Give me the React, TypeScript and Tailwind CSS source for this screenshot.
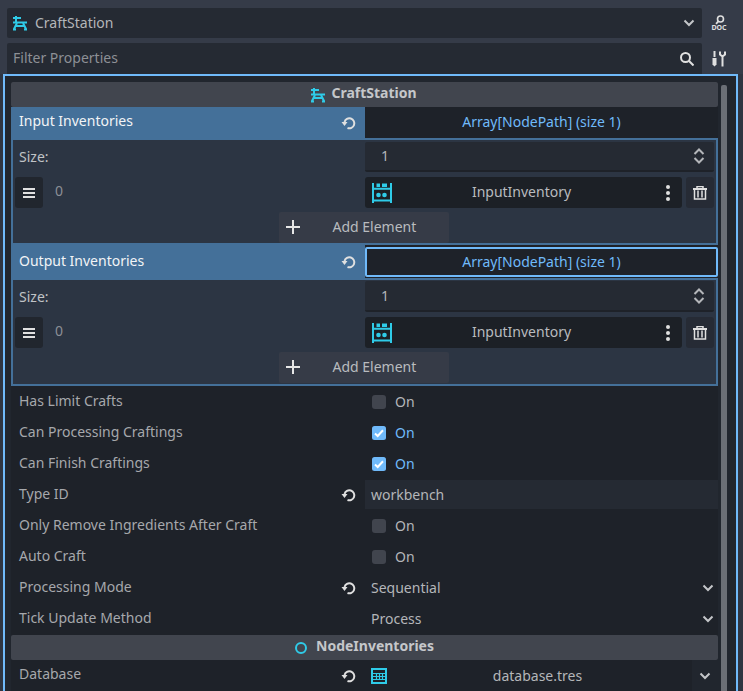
import React from "react";

const Craft = ({ className = "" }: { className?: string }) => (
  <svg width="16" height="16" viewBox="0 0 16 16" className={className} fill="none" stroke="#2fcbe8" strokeWidth="2">
    <path d="M1 3h8M4 1v6M1 7.500h14" />
    <path d="M5 8l-3 6M11 8l3 6M1 14.500h3M12 14.500h3M4 11h8" />
  </svg>
);

const Reset = ({ className = "" }: { className?: string }) => (
  <svg width="16" height="16" viewBox="0 0 16 16" className={className} fill="none">
    <path d="M4.500 7A5 5 0 1 1 7.500 13" stroke="#e0e0e0" strokeWidth="2" />
    <path d="M1.500 7h6L4.500 11z" fill="#e0e0e0" />
  </svg>
);

const Chevron = ({ className = "" }: { className?: string }) => (
  <svg width="12" height="8" viewBox="0 0 12 8" className={className} fill="none" stroke="#c4c6c9" strokeWidth="2">
    <path d="M1.500 1.500L6 6l4.500-4.500" />
  </svg>
);

const Updown = () => (
  <svg width="12" height="16" viewBox="0 0 12 16" fill="none" stroke="#b4b6ba" strokeWidth="2">
    <path d="M1.500 6L6 1.500 10.500 6M1.500 10L6 14.500 10.500 10" />
  </svg>
);

const Inventory = () => (
  <svg width="20" height="20" viewBox="0 0 20 20" fill="none">
    <path d="M1 0v20M19 0v20M1 5.700h18M1 17.500h18" stroke="#2fcbe8" strokeWidth="2" />
    <rect x="4.500" y="0.500" width="3.500" height="3.500" fill="#2fcbe8" />
    <rect x="10" y="0.500" width="5" height="3.500" fill="#2fcbe8" />
    <circle cx="6.500" cy="12" r="2.300" fill="#2fcbe8" />
    <circle cx="12.500" cy="12" r="2.300" fill="#2fcbe8" />
  </svg>
);

const Grabber = () => (
  <svg width="12" height="10" viewBox="0 0 12 10" fill="#e0e0e0">
    <rect width="12" height="2" />
    <rect y="4" width="12" height="2" />
    <rect y="8" width="12" height="2" />
  </svg>
);

const Dots = () => (
  <svg width="4" height="16" viewBox="0 0 4 16" fill="#e0e0e0">
    <circle cx="2" cy="2" r="2" />
    <circle cx="2" cy="8" r="2" />
    <circle cx="2" cy="14" r="2" />
  </svg>
);

const Trash = () => (
  <svg width="14" height="14" viewBox="0 0 14 14" fill="none">
    <path d="M0 3h14" stroke="#e0e0e0" strokeWidth="2" />
    <path d="M4 2V0.500h6V2" stroke="#e0e0e0" strokeWidth="1.500" />
    <path d="M1.500 4v9h11V4" stroke="#e0e0e0" strokeWidth="1.500" />
    <path d="M5 4.500v7M9 4.500v7" stroke="#e0e0e0" strokeWidth="1.500" />
  </svg>
);

const Doc = () => (
  <div className="flex w-[16px] flex-col items-center">
    <svg width="16" height="10" viewBox="0 0 16 10" fill="none">
      <circle cx="9.500" cy="4" r="3" stroke="#e0e0e0" strokeWidth="1.600" />
      <path d="M7.500 6.200L5 8.800" stroke="#e0e0e0" strokeWidth="1.800" />
    </svg>
    <span className="text-[7px] font-bold leading-[6px] text-[#e0e0e0]">DOC</span>
  </div>
);

const Tools = () => (
  <svg width="14" height="16" viewBox="0 0 14 16" fill="none">
    <path d="M2.500 0v6" stroke="#e0e0e0" strokeWidth="2" />
    <path d="M0.500 7h4v6.500l-2 2-2-2z" fill="#e0e0e0" />
    <path d="M8 0.500v3l2.500 2 2.500-2v-3M10.500 5v10.500" stroke="#e0e0e0" strokeWidth="2" />
  </svg>
);

const Search = () => (
  <svg width="14" height="14" viewBox="0 0 14 14" fill="none" stroke="#e0e0e0" strokeWidth="2">
    <circle cx="5.500" cy="5.500" r="4.500" />
    <path d="M8.800 8.800L13.500 13.500" />
  </svg>
);

const Database = () => (
  <svg width="16" height="16" viewBox="0 0 16 16" fill="none" stroke="#2fcbe8">
    <rect x="1" y="1" width="14" height="14" strokeWidth="2" />
    <path d="M1 5.500h14M1 8.500h14M1 11.500h14M5.500 5v7M8.500 5v7M11.500 5v7" strokeWidth="1.200" />
  </svg>
);

const Check = () => (
  <svg width="14" height="14" viewBox="0 0 14 14" className="block">
    <rect width="14" height="14" rx="2.500" fill="#70bafa" />
    <path d="M3 7.500l2.700 2.500L11 4.300" fill="none" stroke="#ffffff" strokeWidth="2" />
  </svg>
);

const PropRow = ({
  label,
  reset,
  last,
  children,
}: {
  label: string;
  reset?: boolean;
  last?: boolean;
  children: React.ReactNode;
}) => (
  <div className={`flex h-[31px] ${last ? "mb-[1px]" : ""}`}>
    <div className="flex w-[354px] shrink-0 items-center justify-between pb-[2px] pl-[8px] pr-[9px] text-[#a6a8ac]">
      <span>{label}</span>
      {reset && <Reset className="mt-[3px]" />}
    </div>
    <div className="flex min-w-0 flex-1 items-center">{children}</div>
  </div>
);

const Toggle = ({ on }: { on?: boolean }) => (
  <div className={`flex items-center pl-[7px] ${on ? "text-[#70bafa]" : "text-[#b4b6b9]"}`}>
    {on ? <Check /> : <div className="h-[14px] w-[14px] rounded-[3px] bg-[#41454e]" />}
    <span className="ml-[9px]">On</span>
  </div>
);

const Dropdown = ({ value }: { value: string }) => (
  <div className="flex w-full items-center justify-between pl-[6px] pr-[4px] text-[#b4b6b9]">
    <span>{value}</span>
    <Chevron />
  </div>
);

const ArraySection = ({ label, focused }: { label: string; focused?: boolean }) => (
  <div>
    <div className={`flex ${focused ? "h-[33px]" : "h-[31px]"}`}>
      <div
        className={`flex w-[354px] shrink-0 items-center justify-between bg-[#447099] pl-[8px] pr-[9px] text-[#f2f4f6] ${
          focused ? "pb-[3px]" : "pb-[5px]"
        }`}
      >
        <span>{label}</span>
        <Reset className={focused ? "mt-[3px]" : "mt-[5px]"} />
      </div>
      <div
        className={`flex flex-1 items-center justify-center rounded-[2px] bg-[#1e2229] text-[#70bafa] ${
          focused ? "mb-[1px] mt-[2px] border-2 border-[#70bafa] pb-[2px]" : "pb-[3px]"
        }`}
      >
        Array[NodePath] (size 1)
      </div>
    </div>
    <div className={`border-2 border-[#447099] bg-[#2c3543] px-[2px] ${focused ? "h-[108px] pt-[1px]" : "h-[107px] pt-[2px]"}`}>
      <div className={`flex ${focused ? "h-[31px]" : "h-[30px]"}`}>
        <div className={`flex w-[350px] shrink-0 items-center pl-[4px] text-[#c0c3c7] ${focused ? "pb-[1px]" : "pb-[2px]"}`}>
          Size:
        </div>
        <div className="flex flex-1 items-center justify-between rounded-[2px] border-b-2 border-[#1e2229] bg-[#252a33] pl-[16px] pr-[9px] text-[#b4b6b9]">
          <span className={focused ? "pb-[1px]" : "pb-[2px]"}>1</span>
          <Updown />
        </div>
      </div>
      <div className="mt-[5px] flex h-[31px]">
        <div className="flex h-[31px] w-[28px] shrink-0 items-center justify-center rounded-[3px] bg-[#21262e]">
          <Grabber />
        </div>
        <span className="ml-[12px] flex h-full w-[310px] shrink-0 items-center pb-[5px] text-[#8b8f96]">0</span>
        <div className="flex w-[317px] shrink-0 items-center rounded-[3px] bg-[#1c2026] pl-[7px] pr-[12px] text-[#b9bbbf]">
          <Inventory />
          <span className="flex h-full flex-1 items-center justify-center pb-[3px] pr-[15px]">InputInventory</span>
          <Dots />
        </div>
        <div className="ml-[4px] flex w-[28px] shrink-0 items-center justify-center rounded-[3px] bg-[#262b35]">
          <Trash />
        </div>
      </div>
      <div className="mt-[4px] flex justify-center pr-[2px]">
        <div className="flex h-[31px] w-[170px] items-center rounded-[2px] bg-[#363b47] pl-[7px] text-[#b9bbbf]">
          <svg width="14" height="14" viewBox="0 0 14 14" fill="#e6e6e6" className="mb-[1px]">
            <rect x="6" width="2" height="14" />
            <rect y="6" width="14" height="2" />
          </svg>
          <span className="ml-[33px] pb-[3px]">Add Element</span>
        </div>
      </div>
    </div>
  </div>
);

const Header = ({ icon, label, gap }: { icon: React.ReactNode; label: string; gap: string }) => (
  <div className={`flex h-[25px] items-center justify-center rounded-[2px] bg-[#41454e] pb-[5px] font-bold text-[#c5c7ca] ${gap}`}>
    {icon}
    <span>{label}</span>
  </div>
);

export default function App() {
  return (
    <div
      className="h-[691px] w-[743px] overflow-hidden bg-[#2f3541] text-[14px] leading-[19px]"
      style={{ fontFamily: '"Noto Sans", sans-serif' }}
    >
      <div className="h-[74px] bg-[#353b48] pl-[7px] pt-[8px]">
        <div className="flex h-[30px]">
          <div className="flex w-[695px] items-center rounded-[2px] bg-[#252a33] pl-[5px] pr-[7px] text-[#b4b6b9]">
            <Craft />
            <span className="ml-[7px] flex-1 pb-[1px]">CraftStation</span>
            <Chevron />
          </div>
          <div className="flex w-[34px] items-center justify-center">
            <Doc />
          </div>
        </div>
        <div className="mt-[5px] flex h-[31px]">
          <div className="flex w-[695px] items-center justify-between rounded-t-[2px] bg-[#252a33] pl-[6px] pr-[8px] text-[#8d9096]">
            <span className="pb-[3px]">Filter Properties</span>
            <Search />
          </div>
          <div className="flex w-[34px] items-center justify-center">
            <Tools />
          </div>
        </div>
      </div>
      <div className="ml-[3px] h-[625px] w-[735px] border-x-2 border-t-2 border-[#70bafa] bg-[#21262e] pt-[6px]">
        <div className="flex">
          <div className="ml-[6px] w-[707px] shrink-0 bg-[#1e2229]">
            <Header icon={<Craft className="mt-[5px]" />} label="CraftStation" gap="gap-[5px] pr-[2px]" />
            <ArraySection label="Input Inventories" />
            <ArraySection label="Output Inventories" focused />
            <PropRow label="Has Limit Crafts"><Toggle /></PropRow>
            <PropRow label="Can Processing Craftings"><Toggle on /></PropRow>
            <PropRow label="Can Finish Craftings"><Toggle on /></PropRow>
            <PropRow label="Type ID" reset>
              <div className="flex h-[29px] w-full items-center bg-[#252a33] pl-[6px] text-[#b4b6b9]">workbench</div>
            </PropRow>
            <PropRow label="Only Remove Ingredients After Craft"><Toggle /></PropRow>
            <PropRow label="Auto Craft"><Toggle /></PropRow>
            <PropRow label="Processing Mode" reset><Dropdown value="Sequential" /></PropRow>
            <PropRow label="Tick Update Method" last><Dropdown value="Process" /></PropRow>
            <Header
              icon={<div className="mt-[5px] h-[12px] w-[12px] rounded-full border-2 border-[#2fcbe8]" />}
              label="NodeInventories"
              gap="gap-[9px]"
            />
            <div className="flex h-[31px]">
              <div className="flex w-[354px] shrink-0 items-center justify-between pb-[4px] pl-[8px] pr-[9px] text-[#a6a8ac]">
                <span>Database</span>
                <Reset className="mt-[5px]" />
              </div>
              <div className="flex min-w-0 flex-1 items-center text-[#b4b6b9]">
                <div className="ml-[6px] flex w-[321px] items-center">
                  <Database />
                  <span className="flex-1 pr-[4px] text-center">database.tres</span>
                </div>
                <div className="flex h-full flex-1 items-center justify-center bg-[#21262e]">
                  <Chevron />
                </div>
              </div>
            </div>
          </div>
          <div className="ml-[3px] mt-[3px] h-[700px] w-[6px] rounded-[2px] bg-[#6b6f76]" />
        </div>
      </div>
    </div>
  );
}
